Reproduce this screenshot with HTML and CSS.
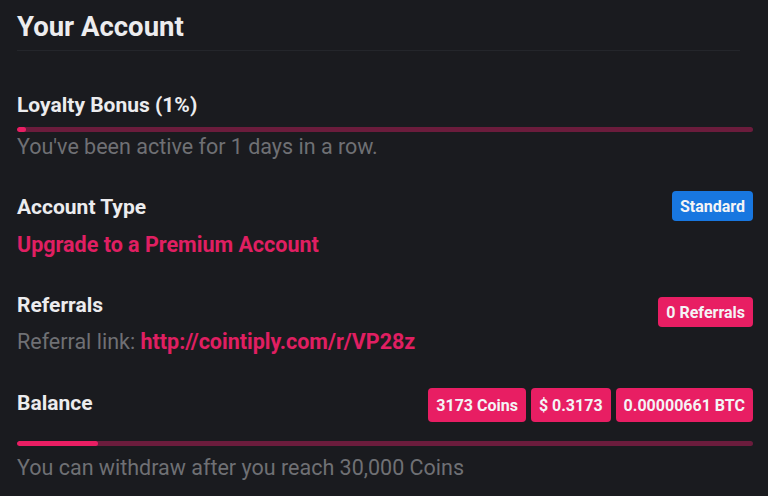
FILE: index.html
```html
<!DOCTYPE html>
<html>
<head>
<meta charset="utf-8">
<link rel="stylesheet" href="styles.css">
</head>
<body>
<div class="card">
  <h1 class="title">Your Account</h1>
  <div class="divider"></div>

  <section class="block loyalty">
    <div class="row"><h2 class="label">Loyalty Bonus (1%)</h2></div>
    <div class="bar"><div class="fill" style="width:1.2%"></div></div>
    <p class="muted">You've been active for 1 days in a row.</p>
  </section>

  <section class="block acct">
    <div class="row">
      <h2 class="label">Account Type</h2>
      <span class="badge blue">Standard</span>
    </div>
    <a class="link upgrade" href="#">Upgrade to a Premium Account</a>
  </section>

  <section class="block refs">
    <div class="row">
      <h2 class="label">Referrals</h2>
      <span class="badge pink">0 Referrals</span>
    </div>
    <p class="muted">Referral link: <a class="link" href="#">http://cointiply.com/r/VP28z</a></p>
  </section>

  <section class="block balance">
    <div class="row">
      <h2 class="label">Balance</h2>
      <div class="badges">
        <span class="badge pink tall">3173 Coins</span>
        <span class="badge pink tall">$ 0.3173</span>
        <span class="badge pink tall">0.00000661 BTC</span>
      </div>
    </div>
    <div class="bar"><div class="fill" style="width:11%"></div></div>
    <p class="muted">You can withdraw after you reach 30,000 Coins</p>
  </section>
</div>
</body>
</html>
```

FILE: styles.css
```css
html, body {
  margin: 0;
  padding: 0;
  background: #1a1b1f;
}
body {
  font-family: Roboto, "Liberation Sans", sans-serif;
  color: #e8e8ea;
  width: 768px;
  height: 496px;
  overflow: hidden;
}
.card {
  padding: 11px 15px 0 17px;
}
.title {
  margin: 0;
  font-size: 27.5px;
  font-weight: 700;
  line-height: 32px;
  color: #ececee;
}
.divider {
  height: 1px;
  background: #24262b;
  margin: 7px 13px 0 0;
}
.block { margin: 0; }
.loyalty { margin-top: 41px; }
.row {
  display: flex;
  align-items: center;
  justify-content: space-between;
}
.label {
  margin: 0;
  font-size: 21px;
  font-weight: 700;
  line-height: 26px;
  color: #ececee;
}
.bar {
  height: 5px;
  border-radius: 3px;
  background: #6b1c3c;
  margin-top: 9px;
  overflow: hidden;
}
.fill {
  height: 100%;
  background: #e91e63;
  border-radius: 3px;
}
.muted {
  margin: 2px 0 0;
  font-size: 21.5px;
  line-height: 26px;
  color: #6f7074;
}
.link {
  color: #e01f62;
  font-weight: 700;
  text-decoration: none;
  font-size: 21.5px;
}
.acct { margin-top: 31px; }
.acct .row { height: 30px; }
.acct .row .label { margin-top: 1px; }
.upgrade { display: block; margin-top: 11px; line-height: 26px; }
.refs { margin-top: 39px; }
.refs .row { height: 30px; }
.refs .row .label { margin-top: -14px; }
.refs .muted { margin-top: 2px; }
.badge {
  display: inline-flex;
  align-items: center;
  height: 30px;
  padding: 0 8px;
  border-radius: 4px;
  font-size: 16px;
  font-weight: 700;
  color: #f4f4f6;
}
.badge.blue { background: #1877e0; }
.badge.pink { background: #e81e63; }
.badge.tall { height: 34px; }
.badges { display: flex; gap: 5px; }
.balance { margin-top: 33px; }
.balance .row .label { margin-top: -4px; }
.balance .bar { margin-top: 19px; }
.balance .muted { margin-top: 9px; }
```
